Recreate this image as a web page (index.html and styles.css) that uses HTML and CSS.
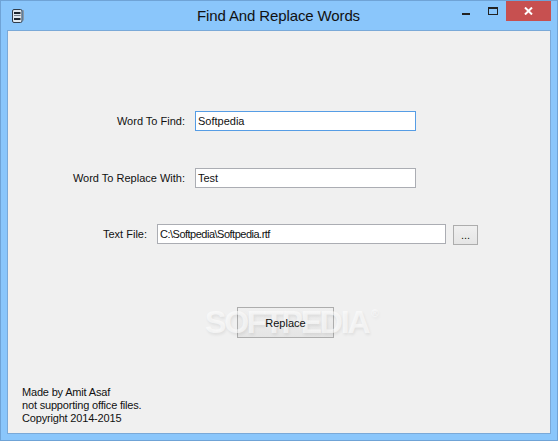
FILE: index.html
```html
<!DOCTYPE html>
<html lang="en">
<head>
<meta charset="utf-8">
<title>Find And Replace Words</title>
<link rel="stylesheet" href="styles.css">
</head>
<body>
<div class="window">
  <header class="titlebar">
    <svg class="app-icon" width="12" height="14" viewBox="0 0 12 14">
      <path d="M10.5 1.5h1v10" fill="none" stroke="#8a99a8"/>
      <rect x="0.5" y="0.5" width="9.5" height="13" rx="1.5" fill="#dfe8f0" stroke="#2f3b49"/>
      <rect x="2" y="3" width="6.5" height="2" fill="#1d2630"/>
      <rect x="2" y="6" width="6.5" height="1" fill="#6f7c8a"/>
      <rect x="2" y="9" width="6.5" height="2" fill="#1d2630"/>
    </svg>
    <h1 class="title">Find And Replace Words</h1>
    <div class="controls">
      <div class="ctl ctl-min"><span class="min-glyph"></span></div>
      <div class="ctl ctl-max"><span class="max-glyph"></span></div>
      <div class="ctl ctl-close">
        <svg width="9" height="8" viewBox="0 0 9 8"><path d="M1 0.5l7 7M8 0.5l-7 7" stroke="#fff" stroke-width="2" fill="none"/></svg>
      </div>
    </div>
  </header>
  <main class="client">
    <div class="row row-find">
      <label class="label label-a">Word To Find:</label>
      <div class="field field-focus field-a">Softpedia</div>
    </div>
    <div class="row row-replace">
      <label class="label label-a">Word To Replace With:</label>
      <div class="field field-a">Test</div>
    </div>
    <div class="row row-file">
      <label class="label label-b">Text File:</label>
      <div class="field field-b">C:\Softpedia\Softpedia.rtf</div>
      <button class="btn btn-browse">...</button>
    </div>
    <div class="replace-wrap"><button class="btn btn-replace"><span class="btn-text">Replace</span></button></div>
    <p class="footer">Made by Amit Asaf<br>not supporting office files.<br>Copyright 2014-2015</p>
    <div class="watermark">SOFTPEDIA<sup class="reg">®</sup></div>
  </main>
</div>
</body>
</html>
```
FILE: styles.css
```css
* { box-sizing: border-box; }
html, body { margin: 0; padding: 0; }
body { width: 558px; height: 441px; overflow: hidden; font-family: "Liberation Sans", Arial, sans-serif; font-size: 11px; color: #000; }
.window { width: 558px; height: 441px; background: #8ac6fb; border: 1px solid #6fa3d6; padding: 0 6px 6px; display: flex; flex-direction: column; }
.titlebar { height: 29px; flex: none; display: flex; align-items: flex-start; position: relative; }
.app-icon { margin: 8px 0 0 5px; flex: none; }
.title { position: absolute; left: 190px; top: 5px; margin: 0; font-weight: 400; font-size: 15px; letter-spacing: -0.12px; line-height: 20px; color: #111; white-space: nowrap; }
.controls { margin-left: auto; display: flex; }
.ctl { height: 20px; display: flex; align-items: center; justify-content: center; }
.ctl-min { width: 27px; }
.ctl-max { width: 27px; }
.ctl-close { width: 45px; background: #c75050; }
.min-glyph { width: 8px; height: 2px; background: #222; margin-top: 6px; }
.max-glyph { width: 10px; height: 8px; border: 1px solid #222; border-top-width: 2px; }
.client { flex: 1; background: #f0f0f0; border: 1px solid #7aa9d8; position: relative; display: flex; flex-direction: column; overflow: hidden; }
.row { display: flex; align-items: flex-start; }
.row-find { margin-top: 80px; }
.row-replace { margin-top: 37px; }
.row-file { margin-top: 36px; }
.label { text-align: right; white-space: nowrap; color: #111; line-height: 20px; }
.label-a { width: 177px; margin-right: 10px; }
.label-b { width: 139px; margin-right: 10px; }
.field { height: 20px; background: #fff; border: 1px solid #abadb3; line-height: 18px; padding-left: 2px; color: #111; white-space: nowrap; }
.field-focus { border-color: #569de5; }
.field-a { width: 221px; }
.field-b { width: 289px; letter-spacing: -0.5px; }
.btn { font: inherit; color: #111; padding: 0; border: 1px solid #adadad; background: linear-gradient(#f0f0f0, #e5e5e5); }
.btn-browse { width: 25px; height: 20px; margin-left: 7px; margin-top: 1px; }
.replace-wrap { margin-top: 62px; padding-left: 229px; display: flex; }
.btn-replace { width: 97px; height: 31px; }
.btn-text { position: relative; z-index: 2; }
.footer { margin: 48px 0 0 14px; line-height: 13px; letter-spacing: -0.18px; color: #111; }
.watermark { position: absolute; z-index: 1; left: 197px; top: 269px; font-size: 32px; line-height: 44px; font-weight: 700; letter-spacing: -2.2px; color: rgba(255,255,255,0.6); text-shadow: 1px 2px 3px rgba(0,0,0,0.07); white-space: nowrap; pointer-events: none; }
.reg { font-size: 10px; font-weight: 400; letter-spacing: 0; margin-left: 3px; vertical-align: 16px; line-height: 0; }
```
